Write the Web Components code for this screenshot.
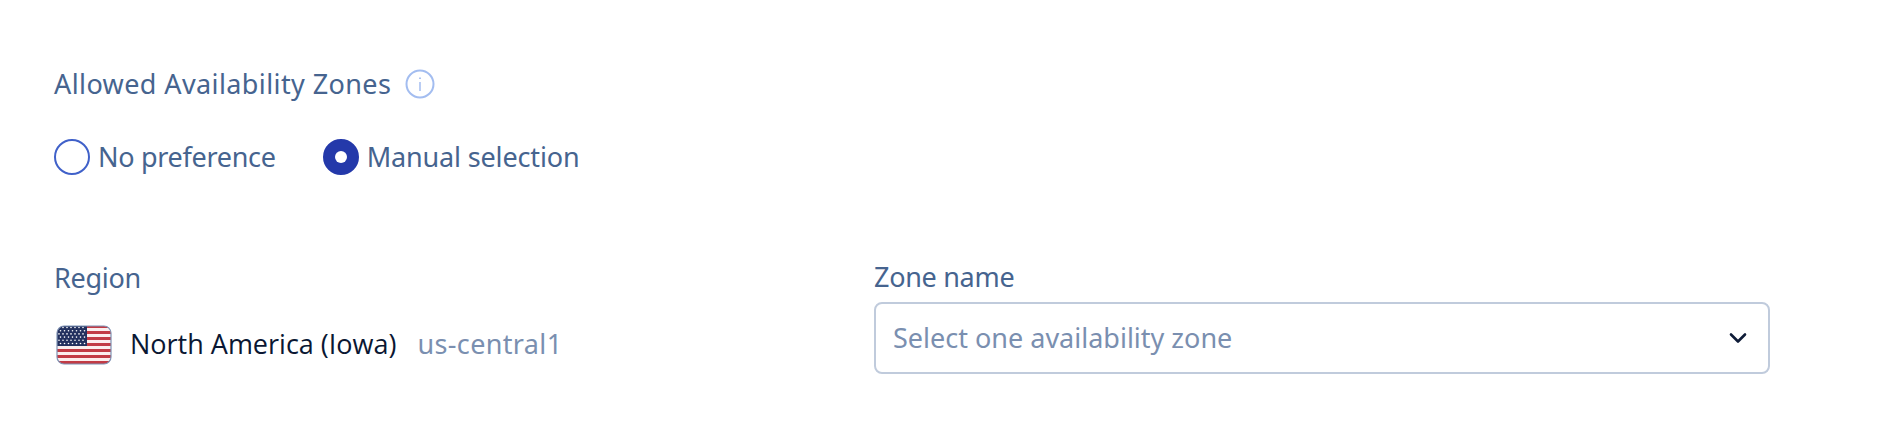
<!DOCTYPE html>
<html>
<head>
<meta charset="utf-8">
<style>
  html, body { margin: 0; background: #fff; }
  body { font-family: "Noto Sans", Lato, sans-serif; }
</style>
</head>
<body>
<zone-form></zone-form>
<script>
class InfoHint extends HTMLElement {
  constructor() {
    super();
    this.attachShadow({ mode: 'open' }).innerHTML = `
      <style>:host { display: inline-flex; } svg { display: block; }</style>
      <svg width="30" height="30" viewBox="0 0 30 30" fill="none" stroke="#a3bdf0" stroke-width="2">
        <circle cx="15" cy="15" r="13.5"/>
        <path d="M15 13v9" stroke-width="1.5"/>
        <path d="M15 8.5v1.6" stroke-width="1.8"/>
      </svg>`;
  }
}
customElements.define('info-hint', InfoHint);

class RadioOption extends HTMLElement {
  constructor() {
    super();
    this.attachShadow({ mode: 'open' }).innerHTML = `
      <style>
        :host { display: inline-flex; align-items: center; gap: 8px; color: #46648f; font-size: 27px; line-height: 36px; }
        .dot { width: 36px; height: 36px; box-sizing: border-box; border-radius: 50%; border: 2px solid #4061c9; background: #fff; display: flex; align-items: center; justify-content: center; }
        :host([checked]) .dot { background: #2439aa; border-color: #2439aa; }
        :host([checked]) .dot::after { content: ""; width: 12px; height: 12px; border-radius: 50%; background: #fff; }
      </style>
      <span class="dot"></span><slot></slot>`;
  }
}
customElements.define('radio-option', RadioOption);

class UsFlag extends HTMLElement {
  constructor() {
    super();
    let stripes = '';
    for (let i = 0; i < 7; i++) {
      stripes += `<rect x="0" y="${i * 6}" width="56" height="3" fill="#c23b45"/>`;
    }
    let stars = '';
    for (let r = 0; r < 6; r++) {
      for (let c = 0; c < 7; c++) {
        stars += `<circle cx="${3 + c * 4 + (r % 2 ? 1.5 : 0)}" cy="${2.5 + r * 3.2}" r="0.8" fill="#fff"/>`;
      }
    }
    this.attachShadow({ mode: 'open' }).innerHTML = `
      <style>:host { display: inline-flex; } svg { display: block; }</style>
      <svg width="56" height="40" viewBox="0 0 56 40">
        <clipPath id="c"><rect x="1" y="1" width="54" height="38" rx="7"/></clipPath>
        <g clip-path="url(#c)">
          <rect width="56" height="40" fill="#fbeeee"/>
          ${stripes}
          <rect x="0" y="0" width="31" height="21" fill="#23315f"/>
          ${stars}
        </g>
        <rect x="1" y="1" width="54" height="38" rx="7" fill="none" stroke="#7f93b5" stroke-width="1.2"/>
      </svg>`;
  }
}
customElements.define('us-flag', UsFlag);

class SelectBox extends HTMLElement {
  constructor() {
    super();
    this.attachShadow({ mode: 'open' }).innerHTML = `
      <style>
        :host { display: flex; align-items: center; justify-content: space-between; box-sizing: border-box; height: 72px; padding: 0 20px 0 17px; border: 2px solid #c0cbdc; border-radius: 8px; background: #fff; color: #7a8fb0; font-size: 27px; }
        .text { padding-bottom: 2px; }
        svg { display: block; }
      </style>
      <span class="text"><slot></slot></span>
      <svg width="20" height="14" viewBox="0 0 20 14" fill="none" stroke="#0f1c38" stroke-width="2.6" stroke-linecap="round" stroke-linejoin="round">
        <path d="M3 3.5l7 7 7-7"/>
      </svg>`;
  }
}
customElements.define('select-box', SelectBox);

class ZoneForm extends HTMLElement {
  constructor() {
    super();
    this.attachShadow({ mode: 'open' }).innerHTML = `
      <style>
        :host { display: block; padding: 66px 108px 0 54px; color: #46648f; font-size: 27px; }
        .head { display: flex; align-items: center; gap: 14px; height: 36px; letter-spacing: .4px; }
        .head span { padding-bottom: 2px; }
        .radios { display: flex; gap: 47px; margin-top: 37px; }
        radio-option { letter-spacing: -.3px; }
        radio-option[checked] { letter-spacing: -.15px; }
        .grid { display: grid; grid-template-columns: 820px 896px; margin-top: 84px; }
        .label { line-height: 36px; height: 36px; padding-top: 1px; letter-spacing: -.3px; }
        .label.zone { margin-top: -1px; padding-bottom: 1px; }
        .region { display: flex; align-items: center; margin-top: 24px; height: 46px; padding-left: 2px; }
        us-flag { margin-top: 3px; }
        .name { color: #0a1733; margin-left: 18px; font-family: "Open Sans", "Noto Sans", sans-serif; }
        .code { color: #7a8fb0; margin-left: 21px; letter-spacing: .35px; }
        select-box { margin-top: 6px; }
      </style>
      <div class="head"><span>Allowed Availability Zones</span><info-hint></info-hint></div>
      <div class="radios">
        <radio-option>No preference</radio-option>
        <radio-option checked>Manual selection</radio-option>
      </div>
      <div class="grid">
        <div>
          <div class="label">Region</div>
          <div class="region"><us-flag></us-flag><span class="name">North America (Iowa)</span><span class="code">us-central1</span></div>
        </div>
        <div>
          <div class="label zone">Zone name</div>
          <select-box>Select one availability zone</select-box>
        </div>
      </div>`;
  }
}
customElements.define('zone-form', ZoneForm);
</script>
</body>
</html>
